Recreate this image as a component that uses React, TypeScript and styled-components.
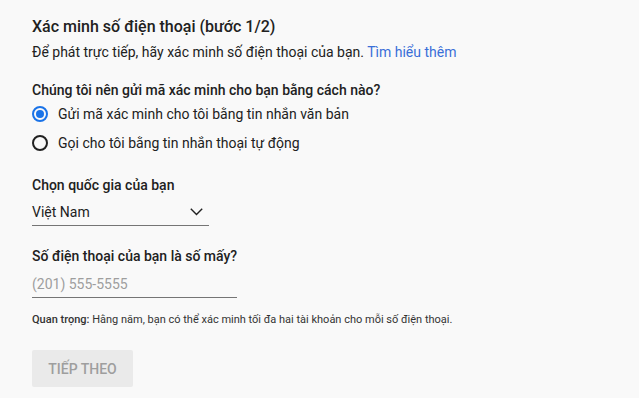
import React from "react";
import styled, { createGlobalStyle } from "styled-components";

const Global = createGlobalStyle`
  html, body { margin: 0; padding: 0; background: #f9f9f9; }
  body { font-family: Roboto, "Noto Sans", Arial, sans-serif; color: #212121; }
  * { box-sizing: border-box; }
`;

const Page = styled.div`
  padding: 17px 32px 0 32px;
  display: flex;
  flex-direction: column;
`;

const Title = styled.h1`
  margin: 0;
  font-size: 16px;
  font-weight: 500;
  line-height: 20px;
  color: #212121;
`;

const Sub = styled.p`
  margin: 6px 0 0 0;
  font-size: 14px;
  line-height: 18px;
  color: #212121;
`;

const Link = styled.a`
  color: #3a6fd8;
  text-decoration: none;
`;

const Label = styled.div<{ $top: number }>`
  margin-top: ${(p) => p.$top}px;
  font-size: 14px;
  font-weight: 500;
  line-height: 18px;
  color: #212121;
`;

const RadioGroup = styled.div`
  display: flex;
  flex-direction: column;
  gap: 11px;
  margin-top: 6px;
`;

const RadioRow = styled.label`
  display: flex;
  align-items: center;
  gap: 10px;
  font-size: 14px;
  line-height: 18px;
  color: #212121;
`;

const RadioCircle = styled.span<{ $checked: boolean }>`
  width: 16px;
  height: 16px;
  border-radius: 50%;
  border: 2px solid ${(p) => (p.$checked ? "#1a73e8" : "#212121")};
  display: flex;
  align-items: center;
  justify-content: center;
  &::after {
    content: "";
    width: 8px;
    height: 8px;
    border-radius: 50%;
    background: ${(p) => (p.$checked ? "#1a73e8" : "transparent")};
  }
`;

const Select = styled.div`
  width: 177px;
  height: 32px;
  padding: 4px 6px 0 0;
  display: flex;
  align-items: center;
  justify-content: space-between;
  border-bottom: 1px solid #757575;
  font-size: 14px;
  color: #212121;
`;

const Input = styled.div`
  width: 205px;
  height: 33px;
  padding-top: 5px;
  display: flex;
  align-items: center;
  border-bottom: 1px solid #757575;
  font-size: 14px;
  color: #9e9e9e;
`;

const Note = styled.p`
  margin: 15px 0 0 0;
  font-size: 11px;
  line-height: 14px;
  color: #333;
  b { font-weight: 500; }
`;

const Button = styled.button`
  margin-top: 23px;
  width: 101px;
  height: 37px;
  border: none;
  border-radius: 2px;
  background: #eaeaea;
  color: #9e9e9e;
  font-family: Roboto, Arial, sans-serif;
  font-size: 14px;
  font-weight: 500;
  padding: 0;
`;

const Chevron = () => (
  <svg width="13" height="8" viewBox="0 0 13 8">
    <path d="M0.8 0.8 L6.5 6.5 L12.2 0.8" fill="none" stroke="#212121" strokeWidth="1.4" />
  </svg>
);

export default function App() {
  return (
    <>
      <Global />
      <Page>
        <Title>Xác minh số điện thoại (bước 1/2)</Title>
        <Sub>
          Để phát trực tiếp, hãy xác minh số điện thoại của bạn. <Link>Tìm hiểu thêm</Link>
        </Sub>
        <Label $top={20}>Chúng tôi nên gửi mã xác minh cho bạn bằng cách nào?</Label>
        <RadioGroup>
          <RadioRow>
            <RadioCircle $checked={true} />
            Gửi mã xác minh cho tôi bằng tin nhắn văn bản
          </RadioRow>
          <RadioRow>
            <RadioCircle $checked={false} />
            Gọi cho tôi bằng tin nhắn thoại tự động
          </RadioRow>
        </RadioGroup>
        <Label $top={24}>Chọn quốc gia của bạn</Label>
        <Select>
          <span>Việt Nam</span>
          <Chevron />
        </Select>
        <Label $top={21}>Số điện thoại của bạn là số mấy?</Label>
        <Input>(201) 555-5555</Input>
        <Note>
          <b>Quan trọng:</b> Hằng năm, bạn có thể xác minh tối đa hai tài khoản cho mỗi số điện thoại.
        </Note>
        <Button>TIẾP THEO</Button>
      </Page>
    </>
  );
}
